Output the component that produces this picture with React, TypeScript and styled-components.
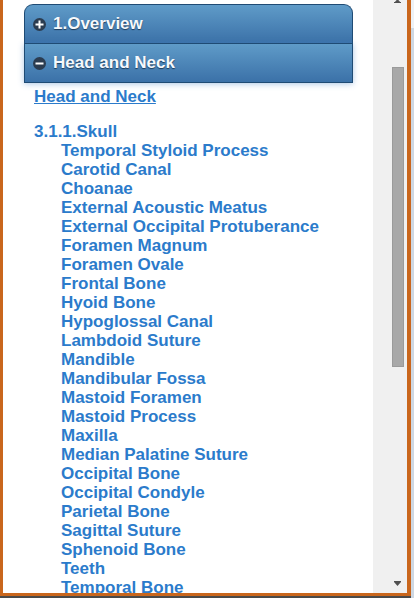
import React from "react";
import styled, { createGlobalStyle } from "styled-components";

const Global = createGlobalStyle`
  html, body { margin: 0; padding: 0; background: #ffffff; }
  body { font-family: "Liberation Sans", Arial, sans-serif; }
`;

const Shell = styled.div`
  width: 414px;
  height: 598px;
  display: flex;
  overflow: hidden;
`;

const FrameCol = styled.div`
  flex: 1;
  display: flex;
  flex-direction: column;
`;

const Frame = styled.div`
  flex: 1;
  min-height: 0;
  display: flex;
  border-left: 3px solid #c9661c;
  border-right: 4px solid #c9661c;
  border-bottom: 3px solid #c9661c;
  box-shadow: inset 1px 0 0 #b0561a, inset -1px 0 0 #b0561a;
`;

const BottomShadow = styled.div`
  height: 2px;
  background: #4a4a4a;
`;

const RightStrip = styled.div`
  width: 3px;
  background: linear-gradient(#eef2f6 0, #eef2f6 28px, #cfd8e2 28px, #cfd8e2 100%);
`;

const Content = styled.div`
  flex: 1;
  min-width: 0;
  overflow: hidden;
  background: #ffffff;
  padding: 4px 20px 0 21px;
`;

const Accordion = styled.div`
  display: flex;
  flex-direction: column;
`;

const Header = styled.div<{ $first?: boolean; $active?: boolean }>`
  box-sizing: border-box;
  height: ${(p) => (p.$first ? "39px" : "40px")};
  display: flex;
  align-items: center;
  gap: 7px;
  padding-left: 8px;
  border: 1px solid #1f4b74;
  border-bottom: ${(p) => (p.$first ? "none" : "1px solid #1f4b74")};
  border-radius: ${(p) => (p.$first ? "9px 9px 0 0" : "0")};
  background: linear-gradient(#5f9bc8, #3b71a8);
  box-shadow: ${(p) => (p.$active ? "0 1px 6px rgba(70, 130, 200, 0.45)" : "none")};
  color: #f6f9fc;
  font-size: 17px;
  font-weight: bold;
  text-shadow: 0 1px 1px #1d3a58;
`;

const Toggle = styled.span`
  width: 13px;
  height: 13px;
  border-radius: 50%;
  background: #2b3c50;
  display: flex;
  align-items: center;
  justify-content: center;
  flex-shrink: 0;
`;

const Heading = styled.a`
  display: block;
  margin-top: 4px;
  margin-left: 10px;
  color: #2b7bcb;
  font-size: 17px;
  font-weight: bold;
  line-height: 19px;
  text-decoration: underline;
`;

const Section = styled.div`
  margin-top: 16px;
  margin-left: 10px;
  color: #2b7bcb;
  font-size: 17px;
  font-weight: bold;
  line-height: 19px;
`;

const List = styled.div`
  display: flex;
  flex-direction: column;
  padding-left: 37px;
`;

const Item = styled.div`
  color: #2b7bcb;
  font-size: 17px;
  font-weight: bold;
  line-height: 19px;
  white-space: nowrap;
`;

const Track = styled.div`
  width: 34px;
  background: #f0f0f0;
  display: flex;
  flex-direction: column;
  align-items: flex-end;
  padding-right: 3px;
  box-sizing: border-box;
`;

const ArrowBox = styled.div<{ $down?: boolean }>`
  width: 14px;
  height: ${(p) => (p.$down ? "8px" : "3px")};
  display: flex;
  justify-content: center;
  align-items: flex-end;
  overflow: hidden;
  margin-top: ${(p) => (p.$down ? "auto" : "0")};
  margin-bottom: ${(p) => (p.$down ? "7px" : "0")};
`;

const Thumb = styled.div`
  margin-top: 64px;
  width: 12px;
  height: 300px;
  background: #a8a8a8;
  border: 1px solid #9a9a9a;
  box-sizing: border-box;
`;

const items = [
  "Temporal Styloid Process",
  "Carotid Canal",
  "Choanae",
  "External Acoustic Meatus",
  "External Occipital Protuberance",
  "Foramen Magnum",
  "Foramen Ovale",
  "Frontal Bone",
  "Hyoid Bone",
  "Hypoglossal Canal",
  "Lambdoid Suture",
  "Mandible",
  "Mandibular Fossa",
  "Mastoid Foramen",
  "Mastoid Process",
  "Maxilla",
  "Median Palatine Suture",
  "Occipital Bone",
  "Occipital Condyle",
  "Parietal Bone",
  "Sagittal Suture",
  "Sphenoid Bone",
  "Teeth",
  "Temporal Bone",
];

const Plus = () => (
  <svg width="9" height="9" viewBox="0 0 9 9">
    <rect x="0.5" y="3.5" width="8" height="2" fill="#ffffff" />
    <rect x="3.5" y="0.5" width="2" height="8" fill="#ffffff" />
  </svg>
);

const Minus = () => (
  <svg width="9" height="9" viewBox="0 0 9 9">
    <rect x="0.5" y="3.5" width="8" height="2" fill="#ffffff" />
  </svg>
);

export default function App() {
  return (
    <>
      <Global />
      <Shell>
        <FrameCol>
          <Frame>
            <Content>
              <Accordion>
                <Header $first>
                  <Toggle>
                    <Plus />
                  </Toggle>
                  1.Overview
                </Header>
                <Header $active>
                  <Toggle>
                    <Minus />
                  </Toggle>
                  Head and Neck
                </Header>
              </Accordion>
              <Heading href="#">Head and Neck</Heading>
              <Section>3.1.1.Skull</Section>
              <List>
                {items.map((t) => (
                  <Item key={t}>{t}</Item>
                ))}
              </List>
            </Content>
            <Track>
              <ArrowBox>
                <svg width="7" height="6" viewBox="0 0 7 6">
                  <path d="M0 6 L3.5 2 L7 6 Z" fill="#505050" />
                  <rect x="0" y="5" width="7" height="1" fill="#505050" />
                </svg>
              </ArrowBox>
              <Thumb />
              <ArrowBox $down>
                <svg width="7" height="5" viewBox="0 0 7 5">
                  <rect x="0" y="0" width="7" height="1" fill="#505050" />
                  <path d="M0 1 L7 1 L3.5 5 Z" fill="#505050" />
                </svg>
              </ArrowBox>
            </Track>
          </Frame>
          <BottomShadow />
        </FrameCol>
        <RightStrip />
      </Shell>
    </>
  );
}
